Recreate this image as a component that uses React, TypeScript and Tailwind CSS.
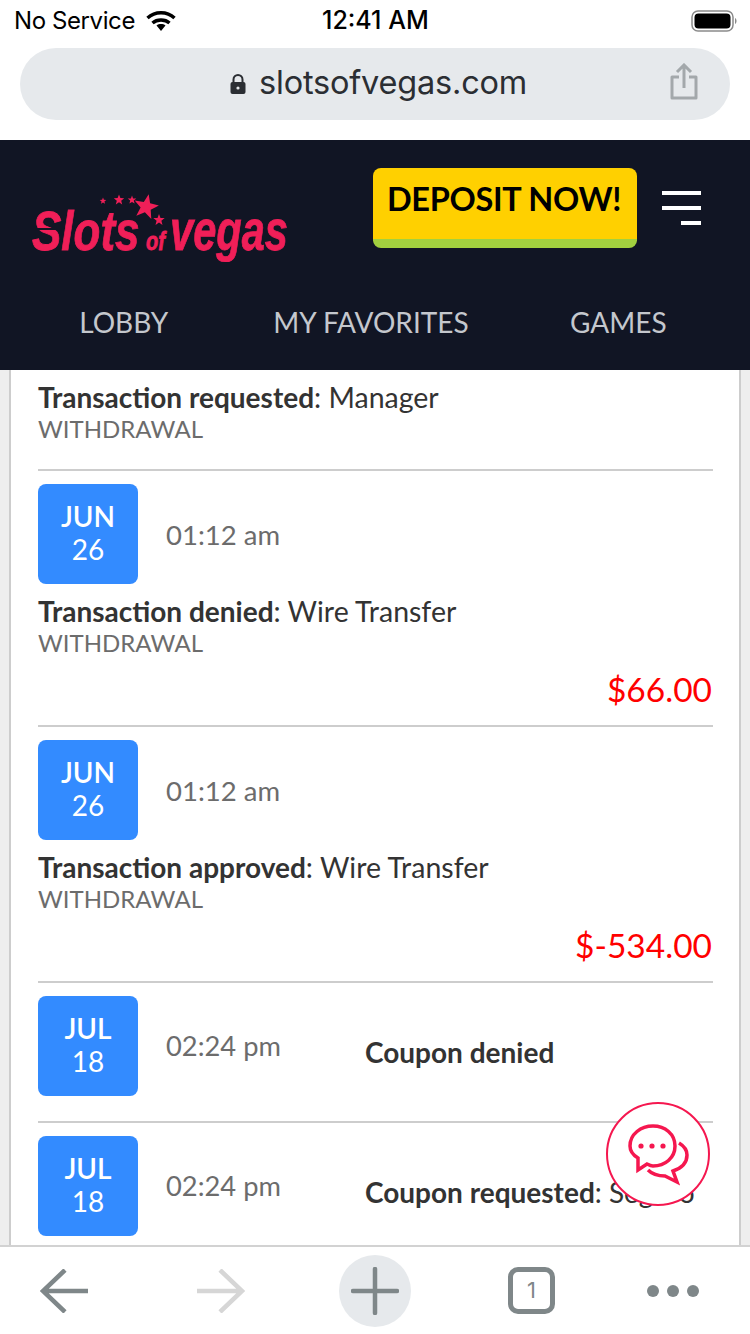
const lato = 'font-["Lato","Liberation_Sans",sans-serif]'

function starPoints(cx: number, cy: number, r: number, rot = 0) {
  const pts: string[] = []
  for (let i = 0; i < 10; i++) {
    const rad = i % 2 === 0 ? r : r * 0.42
    const a = ((-90 + rot + i * 36) * Math.PI) / 180
    pts.push(`${(cx + rad * Math.cos(a)).toFixed(1)},${(cy + rad * Math.sin(a)).toFixed(1)}`)
  }
  return pts.join(' ')
}

function Logo() {
  const pink = '#f01f58'
  return (
    <svg viewBox="30 190 260 72" className="w-[260px] h-[72px] shrink-0">
      <polygon fill={pink} points={starPoints(103, 201, 3.5)} />
      <polygon fill={pink} points={starPoints(119, 200, 5.5)} />
      <polygon fill={pink} points={starPoints(132, 200, 4.5)} />
      <polygon fill={pink} points={starPoints(146, 207, 13, 12)} />
      <polygon fill={pink} points={starPoints(159, 220, 6)} />
      <g fontFamily="'Liberation Sans', sans-serif" fontWeight="700" fontStyle="italic" fill={pink} stroke={pink} strokeWidth="0.8">
        <text transform="translate(32 250) scale(0.8 1)" fontSize="55">Slots</text>
        <text transform="translate(146 250) scale(0.8 1)" fontSize="25">of</text>
        <text transform="translate(170 250) scale(0.73 1)" fontSize="57">vegas</text>
      </g>
      <rect x="36" y="228" width="28" height="2" fill="#111524" />
    </svg>
  )
}

function StatusBar() {
  return (
    <div className="h-[40px] pt-[2px] flex items-center justify-between relative pl-[14px] pr-[13px] font-['Inter',sans-serif] text-[24px] text-black">
      <div className="flex items-center gap-[11px]">
        <span className="tracking-[-0.4px]">No Service</span>
        <svg viewBox="0 0 30 22" className="w-[30px] h-[22px]">
          <path d="M1.5 8 C9 1 21 1 28.5 8" fill="none" stroke="#000" strokeWidth="3.4" />
          <path d="M6.5 13 C11 9 19 9 23.5 13" fill="none" stroke="#000" strokeWidth="3.4" />
          <path d="M10.5 15.5 C13 13.6 17 13.6 19.5 15.5 L15 21 Z" fill="#000" />
        </svg>
      </div>
      <span className="absolute left-[322px] text-[25px] font-medium">12:41 AM</span>
      <svg viewBox="0 0 46 22" className="w-[46px] h-[22px]">
        <rect x="1" y="1" width="41" height="20" rx="6" fill="none" stroke="#8a8a8a" strokeWidth="1.5" />
        <rect x="3.5" y="3.5" width="36" height="15" rx="4" fill="#000" />
        <path d="M44 8 C46 9 46 13 44 14 Z" fill="#8a8a8a" />
      </svg>
    </div>
  )
}

function UrlBar() {
  return (
    <div className="px-[20px] pt-[8px] pb-[20px]">
      <div className="h-[72px] rounded-[36px] bg-[#e6e9ec] flex items-center relative pl-[209px]">
        <svg viewBox="0 0 18 22" className="w-[18px] h-[22px] mr-[12px]">
          <path d="M4.5 10 V6.5 a4.5 4.5 0 0 1 9 0 V10" fill="none" stroke="#2b2e33" strokeWidth="2" />
          <rect x="1.5" y="9" width="15" height="12" rx="2" fill="#2b2e33" />
          <circle cx="9" cy="15" r="1.6" fill="#e6e9ec" />
        </svg>
        <span className="font-['Inter',sans-serif] text-[32.5px] leading-[40px] pb-[2px] text-[#2b2e33] tracking-[-0.2px]">slotsofvegas.com</span>
        <svg viewBox="0 0 28 37" className="absolute right-[32px] top-[15px] w-[28px] h-[37px]">
          <path d="M9 14 H2 V35 H26 V14 H19" fill="none" stroke="#a3a8ab" strokeWidth="3" strokeLinejoin="round" />
          <path d="M14 25 V3 M7 9 L14 2 L21 9" fill="none" stroke="#a3a8ab" strokeWidth="3" />
        </svg>
      </div>
    </div>
  )
}

function Header() {
  return (
    <div className={`h-[230px] bg-[#111524] ${lato}`}>
      <div className="flex h-[140px] pl-[30px]">
        <div className="pt-[50px]">
          <Logo />
        </div>
        <div className="ml-[83px] mt-[28px] w-[264px] h-[80px] rounded-[8px] bg-[#ffd000] border-b-[9px] border-[#a2d03f] pt-[9px] pr-[2px] text-center text-[32.5px] leading-[44px] font-bold text-black tracking-[-0.3px]">
          DEPOSIT NOW!
        </div>
        <div className="ml-[25px] mt-[51px] w-[39px] flex flex-col items-end gap-[11px]">
          <div className="h-[4px] w-[39px] bg-white" />
          <div className="h-[4px] w-[39px] bg-white" />
          <div className="h-[4px] w-[20px] bg-white" />
        </div>
      </div>
      <div className="grid grid-cols-3 w-[742px] text-center text-[28px] leading-[36px] text-[#c4c7cd] pt-[24px]">
        <span>LOBBY</span>
        <span>MY FAVORITES</span>
        <span>GAMES</span>
      </div>
    </div>
  )
}

function DateTile({ month, day }: { month: string; day: string }) {
  return (
    <div className="w-[100px] h-[100px] rounded-[8px] bg-[#338bff] text-white text-center text-[28px] leading-[33px] pt-[16px] shrink-0">
      <div className="font-semibold">{month}</div>
      <div>{day}</div>
    </div>
  )
}

function Divider() {
  return <div className="h-[2px] bg-[#cdcdcd]" />
}

function TxnRow({ month, day, title, method, amount }: { month: string; day: string; title: string; method: string; amount: string }) {
  return (
    <div className="pt-[13px] pb-[16px]">
      <div className="flex items-center">
        <DateTile month={month} day={day} />
        <span className="ml-[28px] pt-[1px] text-[27.5px] text-[#6c6c6c]">01:12 am</span>
      </div>
      <div className="mt-[12px] text-[28.5px] leading-[31px] text-[#333]">
        <b className="font-bold text-[28px]">{title}</b>: {method}
      </div>
      <div className="text-[24px] leading-[32px] text-[#6c6c6c]">WITHDRAWAL</div>
      <div className="mt-[10px] text-right pr-[1px] text-[33.5px] leading-[40px] text-[#ff0000]">{amount}</div>
    </div>
  )
}

function CouponRow({ title, rest, noBottom }: { title: string; rest?: string; noBottom?: boolean }) {
  return (
    <div className={noBottom ? 'pt-[13px]' : 'pt-[13px] pb-[25px]'}>
      <div className="flex items-center">
        <DateTile month="JUL" day="18" />
        <span className="ml-[28px] w-[199px] pt-[1px] text-[27.3px] text-[#6c6c6c]">02:24 pm</span>
        <span className="mt-[12px] text-[28px] text-[#333] whitespace-nowrap">
          <b className="font-bold">{title}</b>
          {rest}
        </span>
      </div>
    </div>
  )
}

function Content() {
  return (
    <div className={`flex-1 bg-[#eeeeee] px-[9px] overflow-hidden ${lato}`}>
      <div className="h-full bg-white border-x-2 border-[#cdcdcd] pl-[27px] pr-[26px] overflow-hidden">
        <div className="pt-[12px] pb-[24px]">
          <div className="text-[28.5px] leading-[31px] text-[#333]">
            <b className="font-bold text-[28px]">Transaction requested</b>: Manager
          </div>
          <div className="text-[24px] leading-[32px] text-[#6c6c6c]">WITHDRAWAL</div>
        </div>
        <Divider />
        <TxnRow month="JUN" day="26" title="Transaction denied" method="Wire Transfer" amount="$66.00" />
        <Divider />
        <TxnRow month="JUN" day="26" title="Transaction approved" method="Wire Transfer" amount="$-534.00" />
        <Divider />
        <CouponRow title="Coupon denied" />
        <Divider />
        <CouponRow title="Coupon requested" rest=": Seguro" noBottom />
      </div>
    </div>
  )
}

function ChatButton() {
  return (
    <div className="absolute left-[606px] top-[1102px] w-[104px] h-[104px] rounded-full bg-white border-2 border-[#f5174f]">
      <svg viewBox="0 0 104 104" className="absolute -left-[2px] -top-[2px] w-[104px] h-[104px]">
        <g fill="none" stroke="#f5174f" strokeWidth="3.5" strokeLinejoin="miter">
          <path d="M32 68 V56 C27 53 24 49 24 44 C24 32 35 24 47 24 C59 24 69 32 69 44 C69 56 59 64 47 64 C45 64 43 63 41 62 Z" />
          <path d="M73 41 C78 44 81 48 81 53 C81 60 76 66 67 69 L71 80 L59 74 C52 74 46 72 42 68" />
        </g>
        <circle cx="35" cy="44" r="2.6" fill="#f5174f" />
        <circle cx="46" cy="44" r="2.6" fill="#f5174f" />
        <circle cx="57" cy="44" r="2.6" fill="#f5174f" />
      </svg>
    </div>
  )
}

function BottomBar() {
  const gray = '#7f8789'
  return (
    <div className="h-[89px] bg-white border-t-2 border-[#d2d2d2] flex items-center relative pl-[40px]">
      <svg viewBox="0 0 50 44" className="w-[50px] h-[44px]">
        <path d="M25 1 L3 22 L25 43 M3 22 H48" fill="none" stroke={gray} strokeWidth="4.5" />
      </svg>
      <svg viewBox="0 0 50 44" className="ml-[105px] w-[50px] h-[44px]">
        <path d="M25 1 L47 22 L25 43 M47 22 H2" fill="none" stroke="#d6d6d6" strokeWidth="4.5" />
      </svg>
      <div className="ml-[94px] w-[72px] h-[72px] rounded-full bg-[#e6e9ec] flex items-center justify-center">
        <svg viewBox="0 0 48 48" className="w-[48px] h-[48px]">
          <path d="M24 2 V46 M2 24 H46" fill="none" stroke={gray} strokeWidth="4.5" strokeLinecap="round" />
        </svg>
      </div>
      <div className="ml-[97px] w-[47px] h-[47px] rounded-[10px] border-[5px] border-[#7f8789] flex items-center justify-center font-['Inter',sans-serif] text-[22px] text-[#7f8789]">
        1
      </div>
      <div className="ml-[92px] flex gap-[8px]">
        <div className="w-[12px] h-[12px] rounded-full bg-[#7f8789]" />
        <div className="w-[12px] h-[12px] rounded-full bg-[#7f8789]" />
        <div className="w-[12px] h-[12px] rounded-full bg-[#7f8789]" />
      </div>
    </div>
  )
}

export default function App() {
  return (
    <div className="relative w-[750px] h-[1334px] flex flex-col bg-white overflow-hidden">
      <StatusBar />
      <UrlBar />
      <Header />
      <Content />
      <BottomBar />
      <ChatButton />
    </div>
  )
}
